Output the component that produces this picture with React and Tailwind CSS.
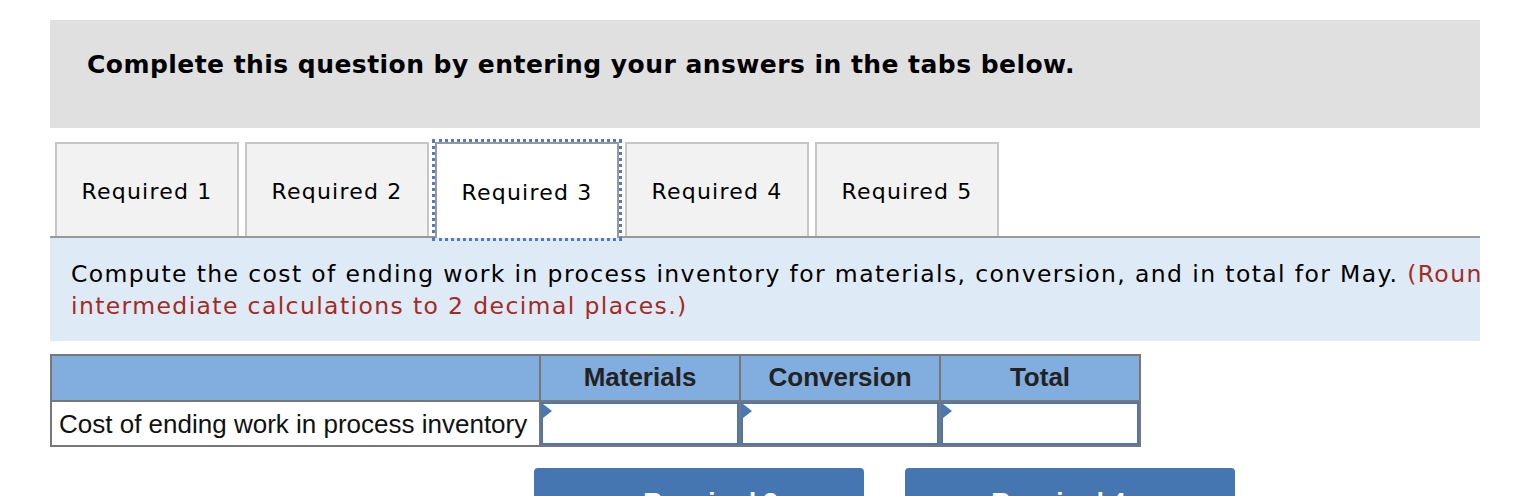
import React from 'react';

const tabs = ['Required 1', 'Required 2', 'Required 3', 'Required 4', 'Required 5'];

const InputCell = () => (
  <td className="p-0 border-2 border-[#777]">
    <div className="relative h-[43px] bg-white border-2 border-[#4a78b5]">
      <span className="absolute left-0 top-0 w-0 h-0 border-t-[7px] border-b-[7px] border-l-[9px] border-t-transparent border-b-transparent border-l-[#4a78b5]" />
    </div>
  </td>
);

const App = () => (
  <div className="w-[1538px] h-[496px] overflow-hidden bg-white pt-5 px-[50px] font-['DejaVu_Sans',Verdana,sans-serif] text-black">
    <div className="w-[1430px] h-[108px] bg-[#e0e0e0] pl-[37px] pt-[30px]">
      <h1 className="text-[25px] leading-[30px] tracking-[0.45px] font-bold">
        Complete this question by entering your answers in the tabs below.
      </h1>
    </div>

    <div className="w-[1430px] mt-[14px] flex items-end gap-[6px] pl-[5px] border-b-2 border-[#999] h-[96px]">
      {tabs.map((t, i) =>
        i === 2 ? (
          <div
            key={t}
            className="relative z-10 -mb-[2px] w-[184px] h-[96px] bg-white border-2 border-b-0 border-[#999] outline-3 outline-dotted outline-[#4d7cc4] outline-offset-0 flex items-center justify-center text-[22px] tracking-[1.2px] pt-[2px]"
          >
            {t}
          </div>
        ) : (
          <div
            key={t}
            className="w-[184px] h-[94px] bg-[#f2f2f2] border-2 border-b-0 border-[#c6c6c6] flex items-center justify-center text-[22px] tracking-[1.2px] pt-[2px]"
          >
            {t}
          </div>
        )
      )}
    </div>

    <div className="w-[1430px] h-[103px] bg-[#deebf7] overflow-hidden pl-[21px] pt-[20px]">
      <p className="w-[1500px] text-[23.5px] leading-[32px] tracking-[1.38px]">
        Compute the cost of ending work in process inventory for materials, conversion, and in total for May.{' '}
        <span className="text-[#a52a22]">(Round your intermediate calculations to 2 decimal places.)</span>
      </p>
    </div>

    <table className="mt-[13px] border-collapse border-2 border-[#777] font-['Liberation_Sans',Arial,sans-serif] text-[26px]">
      <thead>
        <tr className="bg-[#82addf] h-[46px]">
          <th className="w-[489px] border-2 border-[#777]" />
          <th className="w-[200px] border-2 border-[#777] font-bold text-[#222] leading-[30px] pb-[2px]">Materials</th>
          <th className="w-[200px] border-2 border-[#777] font-bold text-[#222] leading-[30px] pb-[2px]">Conversion</th>
          <th className="w-[200px] border-2 border-[#777] font-bold text-[#222] leading-[30px] pb-[2px]">Total</th>
        </tr>
      </thead>
      <tbody>
        <tr>
          <td className="border-2 border-[#777] pl-[7px] pr-1 text-[#111] whitespace-nowrap leading-[30px]">
            Cost of ending work in process inventory
          </td>
          <InputCell />
          <InputCell />
          <InputCell />
        </tr>
      </tbody>
    </table>

    <div className="mt-[21px] flex gap-[41px] pl-[484px]">
      <button className="w-[330px] h-[60px] bg-[#4676b2] rounded-t-[4px] text-white font-bold text-[26px] font-['Liberation_Sans',Arial,sans-serif] pt-[8px]">
        ‹&nbsp;&nbsp;Required 3
      </button>
      <button className="w-[330px] h-[60px] bg-[#4676b2] rounded-t-[4px] text-white font-bold text-[26px] font-['Liberation_Sans',Arial,sans-serif] pt-[8px]">
        Required 4&nbsp;&nbsp;›
      </button>
    </div>
  </div>
);

export default App;
